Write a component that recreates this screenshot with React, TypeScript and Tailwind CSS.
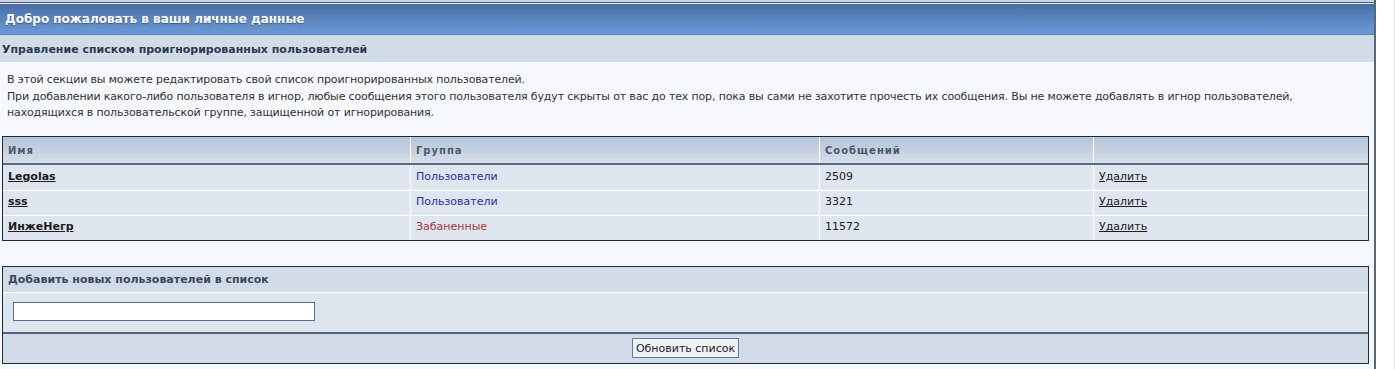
import React from "react";

const rows = [
  { name: "Legolas", group: "Пользователи", color: "text-[#2e2ea8]", posts: "2509" },
  { name: "sss", group: "Пользователи", color: "text-[#2e2ea8]", posts: "3321" },
  { name: "ИнжеНегр", group: "Забаненные", color: "text-[#a33a3a]", posts: "11572" },
];

const cols = "grid grid-cols-[407px_409px_274px_1fr]";

export default function App() {
  return (
    <div
      className="w-[1395px] h-[369px] bg-white flex overflow-hidden text-[11px] text-[#222]"
      style={{ fontFamily: '"DejaVu Sans", Verdana, sans-serif' }}
    >
      <div className="w-[1376px] h-full flex flex-col bg-[#f5f8fc] border-r-2 border-[#56677a]">
        {/* top double rule */}
        <div className="h-[2px] bg-[#c6d4e6]" />
        <div className="h-px bg-[#4f6079]" />
        <div className="h-px bg-[#e8eef6]" />
        {/* title bar */}
        <div className="h-[31px] flex items-center pl-[5px] bg-gradient-to-b from-[#4a6ea5] to-[#6c9ad6] border-b border-[#5f83b6]">
          <span className="text-white font-bold text-[12px] [text-shadow:0_1px_1px_rgba(0,0,0,0.35)]">
            Добро пожаловать в ваши личные данные
          </span>
        </div>
        {/* subheader */}
        <div className="h-[27px] flex items-center pl-[2px] pt-[4px] bg-[#d1dce8]">
          <span className="font-bold text-[11px] text-[#2c3a4e]">
            Управление списком проигнорированных пользователей
          </span>
        </div>
        {/* description */}
        <div className="pl-[7px] pt-[10px] leading-[16.5px] text-[#333] tracking-[-0.15px]">
          В этой секции вы можете редактировать свой список проигнорированных пользователей.
          <br />
          При добавлении какого-либо пользователя в игнор, любые сообщения этого пользователя будут скрыты от вас до тех пор, пока вы сами не захотите прочесть их сообщения. Вы не можете добавлять в игнор пользователей,
          <br />
          находящихся в пользовательской группе, защищенной от игнорирования.
        </div>
        {/* ignore table */}
        <div className="ml-[2px] mt-[14px] w-[1367px] border border-[#1d2b3a] bg-[#dfe5ee]">
          <div className={`${cols} h-[28px] bg-gradient-to-b from-[#b3c3d8] to-[#d6dee9] border-b-2 border-[#5b6c82] text-[10px] font-bold tracking-[1px] text-[#4a5a70]`}>
            <div className="pl-[5px] pt-[2px] flex items-center">Имя</div>
            <div className="pl-[5px] pt-[2px] flex items-center border-l border-white">Группа</div>
            <div className="pl-[5px] pt-[2px] flex items-center border-l border-white">Сообщений</div>
            <div className="border-l border-white" />
          </div>
          {rows.map((r, i) => (
            <div key={r.name} className={`${cols} h-[25px] ${i > 0 ? "border-t border-white" : ""}`}>
              <div className="pl-[5px] flex items-center">
                <a className="font-bold underline text-[#1c1c1c]">{r.name}</a>
              </div>
              <div className={`pl-[5px] flex items-center border-l border-white ${r.color}`}>{r.group}</div>
              <div className="pl-[5px] flex items-center border-l border-white text-[#222]">{r.posts}</div>
              <div className="pl-[5px] flex items-center border-l border-white">
                <a className="underline text-[#1c1c1c]">Удалить</a>
              </div>
            </div>
          ))}
        </div>
        {/* add box */}
        <div className="ml-[2px] mt-[25px] w-[1367px] border border-[#1d2b3a] bg-[#dfe5ee]">
          <div className="h-[26px] flex items-center pl-[5px] pt-[2px] bg-[#d0dbe7] border-b border-white">
            <span className="font-bold text-[#3a4860]">Добавить новых пользователей в список</span>
          </div>
          <div className="h-[39px] pl-[10px] pt-[9px]">
            <input
              type="text"
              className="block w-[302px] h-[19px] bg-white border border-[#5d7091] outline-none"
            />
          </div>
          <div className="h-[31px] flex items-center justify-center bg-[#d0dbe7] border-t-2 border-[#55667c]">
            <button
              className="h-[20px] px-[3px] bg-[#eef2f7] border border-[#5d7db0] text-[11px] text-[#222] leading-none"
              style={{ fontFamily: '"DejaVu Sans", Verdana, sans-serif' }}
            >
              Обновить список
            </button>
          </div>
        </div>
      </div>
      <div className="flex-1 flex justify-end">
        <div className="w-px h-full bg-[#e2e2e2]" />
      </div>
    </div>
  );
}
